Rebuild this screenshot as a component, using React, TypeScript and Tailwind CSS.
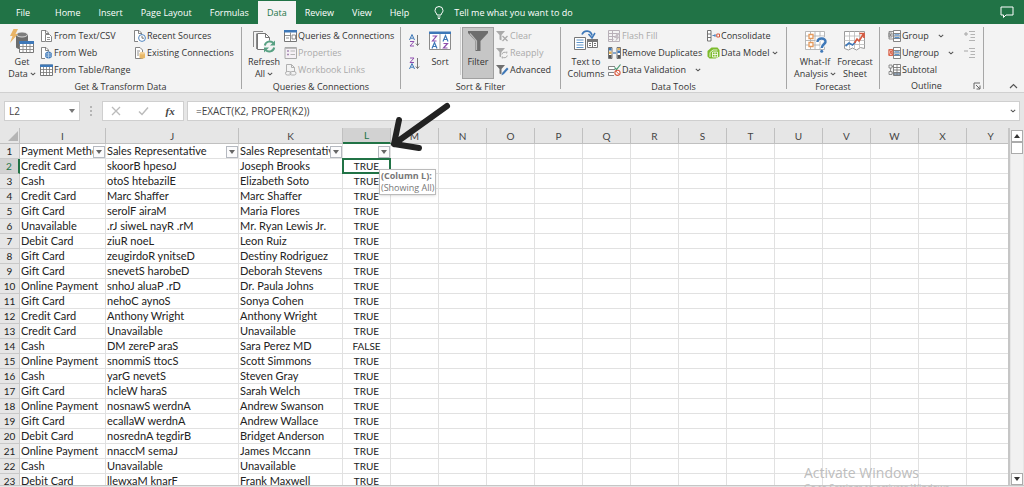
import React from 'react'

type Row = [string, string, string, string]

const tabs = ['Home', 'Insert', 'Page Layout', 'Formulas', 'Data', 'Review', 'View', 'Help']

const rows: Row[] = [
  ['Credit Card', 'skoorB hpesoJ', 'Joseph Brooks', 'TRUE'],
  ['Cash', 'otoS htebazilE', 'Elizabeth Soto', 'TRUE'],
  ['Credit Card', 'Marc Shaffer', 'Marc Shaffer', 'TRUE'],
  ['Gift Card', 'serolF airaM', 'Maria Flores', 'TRUE'],
  ['Unavailable', '.rJ siweL nayR .rM', 'Mr. Ryan Lewis Jr.', 'TRUE'],
  ['Debit Card', 'ziuR noeL', 'Leon Ruiz', 'TRUE'],
  ['Gift Card', 'zeugirdoR ynitseD', 'Destiny Rodriguez', 'TRUE'],
  ['Gift Card', 'snevetS harobeD', 'Deborah Stevens', 'TRUE'],
  ['Online Payment', 'snhoJ aluaP .rD', 'Dr. Paula Johns', 'TRUE'],
  ['Gift Card', 'nehoC aynoS', 'Sonya Cohen', 'TRUE'],
  ['Credit Card', 'Anthony Wright', 'Anthony Wright', 'TRUE'],
  ['Credit Card', 'Unavailable', 'Unavailable', 'TRUE'],
  ['Cash', 'DM zereP araS', 'Sara Perez MD', 'FALSE'],
  ['Online Payment', 'snommiS ttocS', 'Scott Simmons', 'TRUE'],
  ['Cash', 'yarG nevetS', 'Steven Gray', 'TRUE'],
  ['Gift Card', 'hcleW haraS', 'Sarah Welch', 'TRUE'],
  ['Online Payment', 'nosnawS werdnA', 'Andrew Swanson', 'TRUE'],
  ['Gift Card', 'ecallaW werdnA', 'Andrew Wallace', 'TRUE'],
  ['Debit Card', 'nosrednA tegdirB', 'Bridget Anderson', 'TRUE'],
  ['Online Payment', 'nnaccM semaJ', 'James Mccann', 'TRUE'],
  ['Cash', 'Unavailable', 'Unavailable', 'TRUE'],
  ['Debit Card', 'llewxaM knarF', 'Frank Maxwell', 'TRUE'],
]

const headings = ['Payment Method', 'Sales Representative', 'Sales Representative', '']
const dataColumns = ['I', 'J', 'K', 'L']
const emptyColumns = ['M', 'N', 'O', 'P', 'Q', 'R', 'S', 'T', 'U', 'V', 'W', 'X', 'Y']

/* ---------- icons ---------- */

const Small = ({ children }: { children: React.ReactNode }) => (
  <svg viewBox="0 0 13 12" className="h-3 w-[13px] shrink-0" fill="none" aria-hidden="true">
    {children}
  </svg>
)

const Large = ({ children }: { children: React.ReactNode }) => (
  <svg viewBox="0 0 24 24" className="h-6 w-6 shrink-0" fill="none" aria-hidden="true">
    {children}
  </svg>
)

const Page = () => (
  <path d="M5 11.5H1.5V.5H6L8.5 3v2M5.5.5V3.5h3" stroke="#777" strokeWidth=".9" fill="none" />
)

const TextCsvIcon = () => (
  <Small>
    <path d="M1.5.5H6L8.5 3v8.500h-7z" fill="#fff" />
    <Page />
    <path d="M5.500 4.500h4l2 2v5h-6z" fill="#fff" stroke="#777" strokeWidth=".9" />
    <path d="M7 7.500h3M7 9.500h3" stroke="#777" strokeWidth=".8" />
  </Small>
)

const WebIcon = () => (
  <Small>
    <path d="M1.5.5H6L8.5 3v8.500h-7z" fill="#fff" />
    <Page />
    <circle cx="8.500" cy="8" r="3.500" fill="#3e78b8" />
    <path d="M5 8h7M8.500 4.500v7M6 6c1.500 1 3.500 1 5 0M6 10c1.500-1 3.500-1 5 0" stroke="#cfe0f2" strokeWidth=".6" />
  </Small>
)

const TableIcon = () => (
  <Small>
    <path d="M.5 1h12v10.500H.5z" fill="#fff" stroke="#777" />
    <path d="M0 .5h13V3H0z" fill="#3e78b8" />
    <path d="M3.500 3v8.500M6.500 3v8.500M9.500 3v8.500M.5 5.500h12M.5 8.500h12" stroke="#777" strokeWidth=".8" />
  </Small>
)

const RecentIcon = () => (
  <Small>
    <path d="M1.5.5H6L8.5 3v8.500h-7z" fill="#fff" />
    <Page />
    <circle cx="9" cy="8" r="3.400" fill="#fff" stroke="#3e78b8" strokeWidth=".9" />
    <path d="M9 6v2.200h2" stroke="#555" strokeWidth=".8" />
  </Small>
)

const ExistingIcon = () => (
  <Small>
    <path d="M2.500.5H7L9.500 3v8.500h-7z" fill="#fff" stroke="#777" strokeWidth=".9" />
    <path d="M4 4h3M4 6h2M4 8h2" stroke="#777" strokeWidth=".8" />
    <path d="M6.500 6.500v4c0 1.500 5.500 1.500 5.500 0v-4z" fill="#e8b868" />
    <ellipse cx="9.250" cy="6.300" rx="2.750" ry="1.200" fill="#f3cf92" />
  </Small>
)

const QueriesIcon = () => (
  <Small>
    <path d="M.5.5h12v11H.5z" fill="#fff" stroke="#777" />
    <path d="M0 0h13v2.500H0z" fill="#3e78b8" />
    <path d="M.5 5.500h6M6.500 2.500v9" stroke="#777" strokeWidth=".8" />
    <path d="M8 5h3.500v4H8zM2 8h3" stroke="#777" strokeWidth=".8" />
  </Small>
)

const PropertiesIcon = () => (
  <Small>
    <path d="M1 .5h11.500v11H1z" fill="#f5f0f5" stroke="#aaa" />
    <path d="M3 4h2M3 7.500h2" stroke="#a78bb5" strokeWidth="1.400" />
    <path d="M6.500 4H11M6.500 7.500H11" stroke="#b5b5b5" />
    <path d="M1 1.500h11.500" stroke="#bbb" />
  </Small>
)

const LinksIcon = () => (
  <Small>
    <path d="M2.500 8V.5h5L10.500 3.500V8M7.500.5v3h3" stroke="#b0b0b0" />
    <rect x="1.500" y="7.500" width="5.500" height="3.500" rx="1.700" stroke="#b0b0b0" />
    <rect x="6" y="7.500" width="6" height="3.500" rx="1.700" stroke="#b0b0b0" />
  </Small>
)

const funnel = 'M0 1h9L5.500 5v5.500l-2-1V5z'

const ClearIcon = () => (
  <Small>
    <path d={funnel} fill="#a9a9a9" />
    <path d="m6.500 6 5 5M11.500 6l-5 5" stroke="#a9a9a9" strokeWidth="1.300" />
  </Small>
)

const ReapplyIcon = () => (
  <Small>
    <path d={funnel} fill="#a9a9a9" />
    <circle cx="8.500" cy="8" r="3.500" fill="#f3f3f3" />
    <path d="M5.800 7.500a2.900 2.900 0 0 1 5-1.300V4.500M11.300 8.500a2.900 2.900 0 0 1-5 1.300v1.700" stroke="#a9a9a9" />
  </Small>
)

const AdvancedIcon = () => (
  <Small>
    <path d={funnel} fill="#6f6f6f" />
    <path d="m5.500 11.500 1-3 4.500-5 1.500 1.500-4.500 5z" fill="#3e78b8" />
  </Small>
)

const FlashFillIcon = () => (
  <Small>
    <path d="M.5.5h11v11H.5zM.5 3.500h11M.5 6.500h8M.5 9.500h5M4.500.5v11" stroke="#b8b0b8" />
    <path d="m9 3-3 5h2.500L7 12l5-5.500H9.500L12 3z" fill="#c3bcc3" />
  </Small>
)

const DuplicatesIcon = () => (
  <Small>
    <path d="M.5.500h3.500v11H.5zM9 .5h3.500v11H9z" fill="#fff" stroke="#666" strokeWidth=".9" />
    <path d="M1 1h2.500v2.500H1zM9.500 3.500H12V6H9.500z" fill="#3e78b8" />
    <path d="M1 4.500h2.500V7H1zM9.500 1H12v2H9.500z" fill="#e3b25a" />
    <path d="M1 8h2.500v3H1zM9.500 8H12v3H9.500z" fill="#555" />
    <path d="M5 6h3" stroke="#3e78b8" strokeWidth="1.200" />
  </Small>
)

const ValidationIcon = () => (
  <Small>
    <path d="M7 2.500H.5v3H7M6 8.500H.5v3H6" stroke="#777" strokeWidth=".9" fill="#fff" />
    <path d="m6.500 3.500 2 2 4-5" stroke="#4a9a72" strokeWidth="1.200" />
    <circle cx="9.500" cy="8.800" r="2.600" fill="#fff" stroke="#d6593f" strokeWidth="1.100" />
    <path d="m7.800 7 3.400 3.500" stroke="#d6593f" />
  </Small>
)

const ConsolidateIcon = () => (
  <Small>
    <path d="M.5.5h3.500v10.500H.5zM.5 4H4M.5 7.500H4" stroke="#666" fill="#fff" strokeWidth=".9" />
    <path d="M5.500 5.500h3M7.500 4l1.500 1.500L7.500 7" stroke="#3e78b8" strokeWidth=".9" />
    <path d="M9.800 4h2.700v3H9.800z" stroke="#d6593f" fill="#fff" />
  </Small>
)

const DataModelIcon = () => (
  <Small>
    <path d="M.5 4 4.500.5h6L12.500 3v6.500l-4 2h-6l-2-2z" fill="#7cbb2c" />
    <path d="M3 10V5.500L6 3h4.500M5.500 5h5v5h-5zM5.500 7.500h5M8 5v5" stroke="#fff" strokeWidth=".8" />
  </Small>
)

const GroupIcon = ({ kind }: { kind: 'group' | 'ungroup' | 'subtotal' }) => (
  <Small>
    <path d="M5.500.5h7v11h-7zM5.500 3.500h7M5.500 6h7M5.500 8.500h7" stroke="#777" fill="#fff" strokeWidth=".9" />
    {kind !== 'subtotal' && <path d="M6.500 4.200h5v1.300h-5zM6.500 7h5v1.300h-5z" fill="#5a93cc" />}
    {kind === 'subtotal' && <path d="M9 .5v11M6 9h6v2H6z" stroke="#777" fill="#9dbde0" strokeWidth=".8" />}
    {kind === 'group' && <path d="M5 1.500H1v7.500h4M1 3h3v4H1zM2.500 4v2M1.800 5h1.500" stroke="#777" strokeWidth=".8" />}
    {kind === 'ungroup' && (
      <path d="M.8 2.500h4v6h-4zM1 8l3.500-5M1.500 3l3 5" stroke="#d6593f" fill="#f3c3b8" strokeWidth=".9" />
    )}
    {kind === 'subtotal' && (
      <path d="M1 1h3v3H1zM1 7.500h3v3H1zM2.500 4v3.500M4 2.500h1.500M4 9h1.500" stroke="#777" strokeWidth=".8" />
    )}
  </Small>
)

const DetailIcon = ({ plus }: { plus?: boolean }) => (
  <Small>
    <path d="M6 1.500h6M7.500 4.500H12M7.500 7.500H12M6 10.500h6" stroke="#b3b3b3" strokeWidth="1.200" />
    <path d={plus ? 'M1 4h4M3 2v4' : 'M1 4h4'} stroke="#a5a5a5" />
  </Small>
)

const GetDataIcon = () => (
  <Large>
    <path d="M6 5v13c0 3 12 3 12 0V5z" fill="#6d6d6d" />
    <ellipse cx="12" cy="5.500" rx="5.500" ry="2.500" fill="#7d7d7d" stroke="#f3f3f3" strokeWidth=".8" />
    <path d="M3.500 0H8L5.500 5H8L0 14l2.500-7H0z" fill="#e9b466" />
    <path d="M9.500 13.500h14v10h-14z" fill="#fff" stroke="#777" />
    <path d="M9 12h15v3H9z" fill="#3e78b8" />
    <path d="M13 15v8.500M16.500 15v8.500M20 15v8.500M9.500 17.500h14M9.500 20.500h14" stroke="#888" strokeWidth=".9" />
  </Large>
)

const RefreshIcon = () => (
  <Large>
    <path d="M1.500 18V2.500H11M4.500 20V4.500" stroke="#8a8a8a" />
    <path d="M5.500 4.500h8l4 4v12h-12z" fill="#fff" stroke="#777" />
    <path d="M13.500 4.500v4h4" stroke="#777" />
    <circle cx="17.500" cy="17.500" r="6" fill="#f3f3f3" />
    <path d="M12.800 16.500a5 5 0 0 1 8.700-2.300M22.200 18.500a5 5 0 0 1-8.700 2.300" stroke="#58a183" strokeWidth="2" />
    <path d="M23 11.500v5h-5zM12 23.500v-5h5z" fill="#58a183" />
  </Large>
)

const SortIcon = () => (
  <svg viewBox="0 0 24 24" className="size-6 shrink-0" aria-hidden="true">
    <path d="M1.500 3.500h21v17h-21z" fill="#fff" stroke="#8a8a8a" />
    <path d="M1 2.500h22V5H1z" fill="#3e78b8" />
    <path d="M12 5v15.500" stroke="#9a9a9a" />
    <g fill="none" strokeWidth="1.200">
      <path d="M4.500 7h4l-4 5h4M15.500 14.500h4l-4 4.500h4" stroke="#8e4fae" />
      <path d="m4 19.500 2.500-6 2.500 6M5 17.500h3M15 12.500l2.500-6 2.500 6M16 10.500h3" stroke="#3e78b8" />
    </g>
  </svg>
)

const SortOrderIcon = ({ desc }: { desc?: boolean }) => (
  <svg viewBox="0 0 11 13" className="h-[13px] w-[11px]" fill="none" aria-hidden="true">
    {desc ? (
      <>
        <path d="M1 1h4L1 5.500h4" stroke="#8e4fae" />
        <path d="m.5 12 2.500-5.500L5.500 12M1.500 10.200h3" stroke="#3e78b8" />
      </>
    ) : (
      <>
        <path d="m.5 6 2.500-5.500L5.500 6M1.500 4.200h3" stroke="#3e78b8" />
        <path d="M1 7.500h4L1 12h4" stroke="#8e4fae" />
      </>
    )}
    <path d="M8.500 1v10.500M6.800 9.500l1.700 2 1.700-2" stroke="#777" />
  </svg>
)

const FilterIcon = () => (
  <Large>
    <path d="M2 2h20v2l-7.500 8v10h-5V12L2 4z" fill="#6d6d6d" />
    <path d="M4 4.500 10.500 12v9" stroke="#b9b9b9" strokeWidth="1.200" />
  </Large>
)

const TextColumnsIcon = () => (
  <Large>
    <path d="M.5 8.500h11v12H.5zM13.500 10.500h10v8h-10z" fill="#fff" stroke="#777" />
    <path d="M2.500 11h7M2.500 13.500h7M2.500 16h7M2.500 18.500h7" stroke="#5f95ca" />
    <path d="M13 10h11v3H13z" fill="#777" />
    <path d="M18.500 12v6.500M15 14.500h2M15 16.500h2M20 14.500h2M20 16.500h2" stroke="#777" />
    <path d="M8 5.500c2-5 9-4.500 10 1" stroke="#3e78b8" strokeWidth="1.700" />
    <path d="m14.500 5 3.500 4 3-5" stroke="#3e78b8" strokeWidth="1.500" />
  </Large>
)

const WhatIfIcon = () => (
  <Large>
    <path d="M2.500 2.500h19v18h-19z" fill="#fff" />
    <path d="M2.500 2.500h19v18h-19zM7.500 2.500v18M12 2.500v18M17 2.500v18M2.500 7h19M2.500 11.500h19M2.500 16h19" stroke="#b0b0b0" strokeWidth=".9" />
    <path d="M6 5.500h4v4H6zM6 13.500h4v4H6z" fill="#fff" stroke="#e59a5c" strokeWidth="1.300" />
    <path d="M14.500 13c0-5 8.500-4.500 8 0-.3 2.300-3.800 2.500-3.800 6" stroke="#f3f3f3" strokeWidth="4.500" />
    <path d="M14.500 13c0-5 8.500-4.500 8 0-.3 2.300-3.800 2.500-3.800 6" stroke="#3e78b8" strokeWidth="2.400" />
    <circle cx="18.700" cy="22.300" r="1.500" fill="#3e78b8" />
  </Large>
)

const ForecastIcon = () => (
  <Large>
    <path d="M1.500 2.500h20v17l-4-1-4 2.500-4-2-4 2-4-1.500z" fill="#fff" stroke="#9a9a9a" />
    <path d="M6.500 2.500v17M11.500 2.500v17M16.500 2.500v17M1.500 7h20M1.500 11.500h20M1.500 15.500h20" stroke="#c0c0c0" strokeWidth=".9" />
    <path d="m2.500 17 3.500-3 3.500 2 3-3" stroke="#3e78b8" strokeWidth="1.700" />
    <path d="m11.500 14 2.500-4 2 2 4.500-7M16.500 4.500H21V9" stroke="#d6593f" strokeWidth="1.700" />
  </Large>
)

const Chevron = () => (
  <svg viewBox="0 0 6 4" className="h-1 w-[6px] shrink-0" fill="none" aria-hidden="true">
    <path d="m.8.8 2.200 2L5.200.8" stroke="#555" strokeWidth="1.100" />
  </svg>
)

/* ---------- ribbon ---------- */

interface CommandProps {
  icon: React.ReactNode
  label: string
  disabled?: boolean
  menu?: 'near' | 'far'
}

const Command = ({ icon, label, disabled, menu }: CommandProps) => (
  <button
    type="button"
    disabled={disabled}
    className="flex h-[17px] items-center gap-px whitespace-nowrap text-[#333] disabled:text-[#aaa]"
  >
    {icon}
    <span>{label}</span>
    {menu && (
      <span className={menu === 'far' ? 'ml-2' : 'ml-0.5'}>
        <Chevron />
      </span>
    )}
  </button>
)

interface BigCommandProps {
  icon: React.ReactNode
  lines: string[]
  menu?: boolean
  active?: boolean
}

const BigCommand = ({ icon, lines, menu, active }: BigCommandProps) => (
  <button
    type="button"
    className={`flex flex-col items-center whitespace-nowrap text-[#333] ${
      active ? 'h-[52px] w-8 border border-[#a0a0a0] bg-[#c6c6c6] pt-px' : 'h-[52px] w-10 pt-0.5'
    }`}
  >
    {icon}
    <span className="mt-[3px] flex flex-col text-center leading-3">
      {lines.map((line, i) => (
        <span key={line} className="flex items-center justify-center gap-0.5">
          {line}
          {menu && i === lines.length - 1 && <Chevron />}
        </span>
      ))}
    </span>
  </button>
)

interface RibbonGroupProps {
  label: string
  width: string
  children: React.ReactNode
  launcher?: boolean
}

const RibbonGroup = ({ label, width, children, launcher }: RibbonGroupProps) => (
  <section
    aria-label={label}
    className={`flex shrink-0 flex-col border-r border-[#a6a6a6] ${width}`}
  >
    <div className="flex h-[52px] items-start">{children}</div>
    <div className="mt-0.5 flex items-center">
      <span className="flex-1 text-center leading-3">{label}</span>
      {launcher && (
        <button type="button" aria-label="Outline settings" className="mr-0.5">
          <svg viewBox="0 0 8 8" className="size-2" fill="none">
            <path d="M1 7V1h6M3 3l4 4M7 3.500V7H3.500" stroke="#666" />
          </svg>
        </button>
      )}
    </div>
  </section>
)

const Ribbon = () => (
  <div className="flex h-[69px] shrink-0 border-b border-[#d0d0d0] bg-[#f3f3f3] pt-[3px] pb-[3px]">
    <RibbonGroup label="Get & Transform Data" width="w-[242px]">
      <div className="ml-0.5">
        <BigCommand icon={<GetDataIcon />} lines={['Get', 'Data']} menu />
      </div>
      <div className="-ml-0.5 w-[93px]">
        <Command icon={<TextCsvIcon />} label="From Text/CSV" />
        <Command icon={<WebIcon />} label="From Web" />
        <Command icon={<TableIcon />} label="From Table/Range" />
      </div>
      <div>
        <Command icon={<RecentIcon />} label="Recent Sources" />
        <Command icon={<ExistingIcon />} label="Existing Connections" />
      </div>
    </RibbonGroup>

    <RibbonGroup label="Queries & Connections" width="w-[159px]">
      <div className="ml-0.5">
        <BigCommand icon={<RefreshIcon />} lines={['Refresh', 'All']} menu />
      </div>
      <div>
        <Command icon={<QueriesIcon />} label="Queries & Connections" />
        <Command icon={<PropertiesIcon />} label="Properties" disabled />
        <Command icon={<LinksIcon />} label="Workbook Links" disabled />
      </div>
    </RibbonGroup>

    <RibbonGroup label="Sort & Filter" width="w-[160px]">
      <div className="ml-2 flex flex-col gap-[10px] pt-[7px]">
        <button type="button" aria-label="Sort A to Z">
          <SortOrderIcon />
        </button>
        <button type="button" aria-label="Sort Z to A">
          <SortOrderIcon desc />
        </button>
      </div>
      <BigCommand icon={<SortIcon />} lines={['Sort']} />
      <div className="mr-px h-12 border-r border-[#d0d0d0]" />
      <BigCommand icon={<FilterIcon />} lines={['Filter']} active />
      <div className="ml-0.5">
        <Command icon={<ClearIcon />} label="Clear" disabled />
        <Command icon={<ReapplyIcon />} label="Reapply" disabled />
        <Command icon={<AdvancedIcon />} label="Advanced" />
      </div>
    </RibbonGroup>

    <RibbonGroup label="Data Tools" width="w-[226px]">
      <div className="ml-[5px]">
        <BigCommand icon={<TextColumnsIcon />} lines={['Text to', 'Columns']} />
      </div>
      <div className="ml-0.5 w-[99px]">
        <Command icon={<FlashFillIcon />} label="Flash Fill" disabled />
        <Command icon={<DuplicatesIcon />} label="Remove Duplicates" />
        <Command icon={<ValidationIcon />} label="Data Validation" menu="far" />
      </div>
      <div>
        <Command icon={<ConsolidateIcon />} label="Consolidate" />
        <Command icon={<DataModelIcon />} label="Data Model" menu="near" />
      </div>
    </RibbonGroup>

    <RibbonGroup label="Forecast" width="w-[93px]">
      <div className="ml-2 flex">
        <BigCommand icon={<WhatIfIcon />} lines={['What-If', 'Analysis']} menu />
        <BigCommand icon={<ForecastIcon />} lines={['Forecast', 'Sheet']} />
      </div>
    </RibbonGroup>

    <RibbonGroup label="Outline" width="w-[104px]" launcher>
      <div className="ml-2 w-[75px]">
        <Command icon={<GroupIcon kind="group" />} label="Group" menu="far" />
        <Command icon={<GroupIcon kind="ungroup" />} label="Ungroup" menu="far" />
        <Command icon={<GroupIcon kind="subtotal" />} label="Subtotal" />
      </div>
      <div>
        <button type="button" disabled aria-label="Show Detail" className="flex h-[17px] items-center">
          <DetailIcon plus />
        </button>
        <button type="button" disabled aria-label="Hide Detail" className="flex h-[17px] items-center">
          <DetailIcon />
        </button>
      </div>
    </RibbonGroup>

    <div className="flex flex-1 items-end justify-end pr-[6px]">
      <button type="button" aria-label="Collapse the Ribbon">
        <svg viewBox="0 0 9 6" className="h-[6px] w-[9px]" fill="none">
          <path d="m1 5 3.500-3.500L8 5" stroke="#555" strokeWidth="1.200" />
        </svg>
      </button>
    </div>
  </div>
)

const TabBar = () => (
  <nav className="flex h-6 shrink-0 items-stretch bg-[#217346] text-white">
    <button type="button" className="w-[46px] pt-px">
      File
    </button>
    {tabs.map((tab) => (
      <button
        key={tab}
        type="button"
        className={
          tab === 'Data'
            ? 'mt-px bg-[#f3f3f3] px-[9px] text-[#217346]'
            : 'px-[9px] pt-px whitespace-nowrap'
        }
      >
        {tab}
      </button>
    ))}
    <button type="button" className="ml-4 flex items-center gap-[10px] pt-px whitespace-nowrap">
      <svg viewBox="0 0 10 13" className="h-[13px] w-[10px]" fill="none" aria-hidden="true">
        <path d="M3 9C3 7.500 1 6.500 1 4.500a4 4 0 0 1 8 0C9 6.500 7 7.500 7 9zM3.500 11h3M4 12.500h2" stroke="#fff" />
      </svg>
      Tell me what you want to do
    </button>
    <button type="button" aria-label="Comments" className="mr-[10px] ml-auto">
      <svg viewBox="0 0 14 12" className="h-3 w-[14px]" fill="none">
        <path d="M1 1h12v8H6l-2.500 2.500V9H1z" stroke="#fff" />
      </svg>
    </button>
  </nav>
)

const FormulaBar = () => (
  <div className="flex h-[35px] shrink-0 items-center bg-[#e6e6e6] pr-1 pl-1 text-[#444]">
    <div className="flex h-5 w-[76px] items-center border border-[#cfcfcf] bg-white pr-1">
      <input
        aria-label="Name Box"
        defaultValue="L2"
        className="w-full min-w-0 bg-transparent pl-1 text-[10px] outline-none"
      />
      <svg viewBox="0 0 6 4" className="h-1 w-[6px] shrink-0" aria-hidden="true">
        <path d="M0 0h6L3 4z" fill="#777" />
      </svg>
    </div>
    <svg viewBox="0 0 2 10" className="mx-[10px] h-[10px] w-[2px]" aria-hidden="true">
      <path d="M0 0h2v2H0zM0 4h2v2H0zM0 8h2v2H0z" fill="#b5b5b5" />
    </svg>
    <div className="flex h-5 w-[82px] items-center justify-around border border-[#cfcfcf] bg-white">
      <button type="button" aria-label="Cancel">
        <svg viewBox="0 0 10 10" className="size-[10px]" fill="none">
          <path d="m1 1 8 8M9 1 1 9" stroke="#bbb" strokeWidth="1.300" />
        </svg>
      </button>
      <button type="button" aria-label="Enter">
        <svg viewBox="0 0 11 10" className="h-[10px] w-[11px]" fill="none">
          <path d="m1 5.500 3 3L10 1.500" stroke="#bbb" strokeWidth="1.500" />
        </svg>
      </button>
      <button
        type="button"
        aria-label="Insert Function"
        className="font-['Liberation_Serif',serif] text-[11px] leading-3 font-bold italic"
      >
        fx
      </button>
    </div>
    <div className="ml-[3px] flex h-5 flex-1 items-center border border-[#cfcfcf] bg-white pr-[3px]">
      <input
        aria-label="Formula Bar"
        defaultValue="=EXACT(K2, PROPER(K2))"
        className="w-full min-w-0 bg-transparent pl-2 text-[10px] outline-none"
      />
      <Chevron />
    </div>
  </div>
)

/* ---------- sheet ---------- */

const FilterButton = ({ column }: { column: string }) => (
  <button
    type="button"
    aria-label={`Filter column ${column}`}
    className="absolute right-0 bottom-0 flex size-3 items-center justify-center border border-[#b5b9c0] bg-[#fbfbfc]"
  >
    <svg viewBox="0 0 6 4" className="h-1 w-[6px]" aria-hidden="true">
      <path d="M0 0h6L3 4z" fill="#666" />
    </svg>
  </button>
)

const cell = 'h-[15px] overflow-hidden border-r border-b border-[#e1e1e1] p-0 pl-px whitespace-nowrap'
const rowHead = 'h-[15px] border-r border-b border-[#c9c9c9] p-0 text-center text-[10px] font-normal'
const resultCell = 'border-r border-b border-[#e1e1e1] p-0 text-center text-[10px]'

const Sheet = () => (
  <table className="w-full min-w-[1015px] table-fixed border-separate border-spacing-0 bg-white font-[Lato,sans-serif] text-[11px] leading-[14px] text-[#222]">
    <colgroup>
      <col className="w-5" />
      <col className="w-[86px]" />
      <col className="w-[133px]" />
      <col className="w-[104px]" />
      <col className="w-12" />
      {emptyColumns.map((name) => (
        <col key={name} className="w-12" />
      ))}
    </colgroup>
    <thead>
      <tr className="bg-[#e6e6e6] text-[10px] text-[#444]">
        <th className="h-4 border-r border-b border-[#c0c0c0] p-0">
          <svg viewBox="0 0 10 10" className="ml-2 size-[10px]" aria-hidden="true">
            <path d="M10 0v10H0z" fill="#b5b5b5" />
          </svg>
        </th>
        {[...dataColumns, ...emptyColumns].map((name) => (
          <th
            key={name}
            className={
              name === 'L'
                ? 'border-r border-b-2 border-r-[#c0c0c0] border-b-[#217346] bg-[#d2d2d2] p-0 font-normal text-[#217346]'
                : 'border-r border-b border-[#c0c0c0] p-0 font-normal'
            }
          >
            {name}
          </th>
        ))}
      </tr>
    </thead>
    <tbody>
      <tr>
        <th className={`${rowHead} bg-[#e6e6e6]`}>1</th>
        {headings.map((heading, i) => (
          <td key={dataColumns[i]} className={`${cell} relative`}>
            {heading}
            <FilterButton column={dataColumns[i]} />
          </td>
        ))}
        {emptyColumns.map((name) => (
          <td key={name} className={cell} />
        ))}
      </tr>
      {rows.map((row, r) => (
        <tr key={r}>
          <th
            className={
              r === 0
                ? 'h-[15px] border-r-2 border-b border-r-[#217346] border-b-[#c9c9c9] bg-[#d2d2d2] p-0 text-center text-[10px] font-normal text-[#217346]'
                : `${rowHead} bg-[#e6e6e6]`
            }
          >
            {r + 2}
          </th>
          {row.slice(0, 3).map((value, c) => (
            <td key={c} className={cell}>
              {value}
            </td>
          ))}
          {r === 0 ? (
            <td className={`${resultCell} relative`}>
              {row[3]}
              <div className="absolute -inset-px border-2 border-[#217346]" />
              <div
                role="tooltip"
                className="absolute top-[10px] left-9 z-10 border border-[#bbb] bg-white px-px font-['Open_Sans',sans-serif] text-[9px] leading-3 whitespace-nowrap text-[#777] shadow-sm"
              >
                <p className="text-left font-bold">(Column L):</p>
                <p className="text-left">(Showing All)</p>
              </div>
            </td>
          ) : (
            <td className={resultCell}>{row[3]}</td>
          )}
          {emptyColumns.map((name) => (
            <td key={name} className={cell} />
          ))}
        </tr>
      ))}
    </tbody>
  </table>
)

const ScrollBar = () => (
  <div className="flex w-4 shrink-0 flex-col items-center border-l-2 border-[#c6c6c6] bg-[#e6e6e6] pt-0.5">
    <button
      type="button"
      aria-label="Scroll up"
      className="flex size-3 items-center justify-center border border-[#ababab] bg-white"
    >
      <svg viewBox="0 0 6 4" className="h-1 w-[6px]">
        <path d="M0 4h6L3 0z" fill="#333" />
      </svg>
    </button>
    <div className="flex w-3 flex-1 flex-col bg-[#f1f1f1]">
      <div className="h-3 border border-[#ababab] bg-white" />
    </div>
    <button
      type="button"
      aria-label="Scroll down"
      className="flex size-3 items-center justify-center border border-[#ababab] bg-white"
    >
      <svg viewBox="0 0 6 4" className="h-1 w-[6px]">
        <path d="M0 0h6L3 4z" fill="#333" />
      </svg>
    </button>
  </div>
)

const App = () => (
  <div className="relative flex h-screen flex-col overflow-hidden bg-[#e6e6e6] font-['Open_Sans',sans-serif] text-[9px] leading-3 text-[#333]">
    <TabBar />
    <Ribbon />
    <FormulaBar />

    <main className="flex min-h-0 flex-1">
      <div className="min-w-0 flex-1 overflow-hidden">
        <Sheet />
      </div>
      <ScrollBar />
    </main>
    <footer className="h-0.5 shrink-0 border-t border-[#c6c6c6]" />

    {/* pointer to the filter button of column L */}
    <svg
      viewBox="0 0 62 52"
      className="absolute top-[101px] left-[389px] z-20 h-[52px] w-[62px]"
      fill="none"
      aria-hidden="true"
    >
      <path
        d="M58 5 5 43M10 19 5 43l25 4"
        stroke="#222"
        strokeWidth="6"
        strokeLinecap="round"
        strokeLinejoin="round"
      />
    </svg>

    <div className="absolute top-[464px] right-[60px] h-[23px] w-[160px] overflow-hidden whitespace-nowrap text-[#bdbdbd]">
      <p className="text-sm leading-[18px]">Activate Windows</p>
      <p className="text-[9px] leading-3">Go to Settings to activate Windows.</p>
    </div>
  </div>
)

export default App
